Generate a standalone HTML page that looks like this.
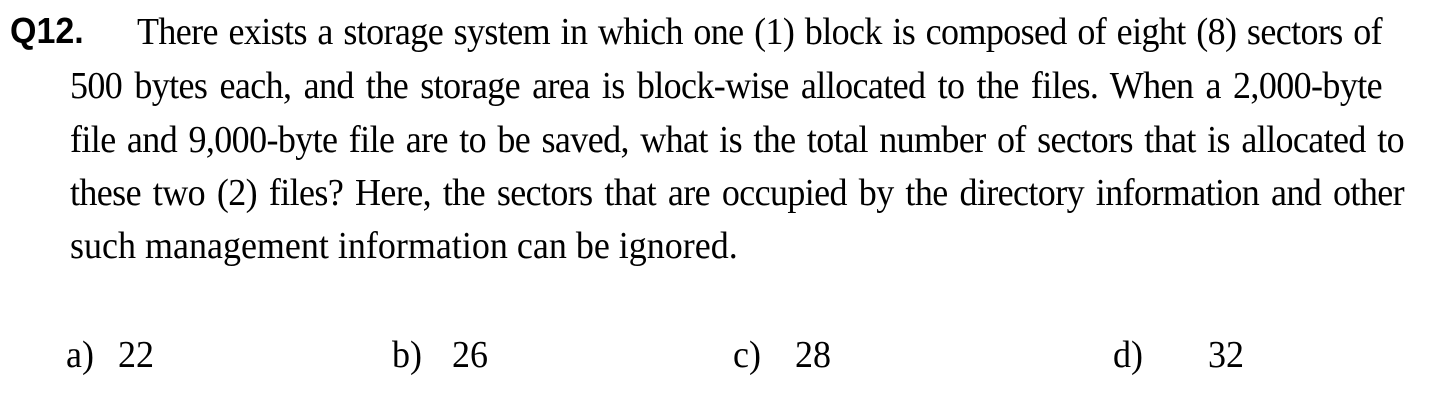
<!DOCTYPE html>
<html><head><style>
body{margin:0;width:1450px;height:401px;background:#fff;position:relative;overflow:hidden;font-family:"Liberation Serif",serif;font-size:36px;color:#000}
.l{position:absolute;line-height:36px;white-space:nowrap;transform:scaleY(1.07);transform-origin:0 30px}
.j{text-align:justify;text-align-last:justify;white-space:normal;letter-spacing:-0.6px;height:36px}
.q{font-family:"Liberation Sans",sans-serif;font-weight:bold;font-size:34px}
</style></head><body>
<div class="l q" style="left:10px;top:14px">Q12.</div>
<div class="l j" style="left:137px;top:14px;width:1245px">There exists a storage system in which one (1) block is composed of eight (8) sectors of</div>
<div class="l j" style="left:70px;top:68px;width:1312px">500 bytes each, and the storage area is block-wise allocated to the files. When a 2,000-byte</div>
<div class="l j" style="left:70px;top:122px;width:1334px">file and 9,000-byte file are to be saved, what is the total number of sectors that is allocated to</div>
<div class="l j" style="left:70px;top:175px;width:1334px">these two (2) files? Here, the sectors that are occupied by the directory information and other</div>
<div class="l" style="left:70px;top:228px">such management information can be ignored.</div>
<div class="l" style="left:66px;top:337px">a)</div><div class="l" style="left:118px;top:337px">22</div>
<div class="l" style="left:392px;top:337px">b)</div><div class="l" style="left:452px;top:337px">26</div>
<div class="l" style="left:733px;top:337px">c)</div><div class="l" style="left:795px;top:337px">28</div>
<div class="l" style="left:1113px;top:337px">d)</div><div class="l" style="left:1208px;top:337px">32</div>
</body></html>
